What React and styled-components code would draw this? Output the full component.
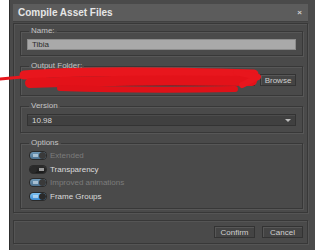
import React from 'react';
import styled, { createGlobalStyle } from 'styled-components';

const GlobalStyle = createGlobalStyle`
  html, body {
    margin: 0;
    padding: 0;
    background: #fff;
  }
  body {
    font-family: "Liberation Sans", Arial, sans-serif;
  }
`;

const Page = styled.div`
  position: relative;
  width: 315px;
  height: 250px;
  padding-left: 9px;
  box-sizing: border-box;
  display: flex;
  overflow: hidden;
`;

const Window = styled.div`
  flex: 1;
  display: flex;
  flex-direction: column;
  background: #4a4a4a;
  border-left: 1px solid #2e2e2e;
  padding: 4px 7px 6px 3px;
  gap: 1px;
`;

const TitleBar = styled.div`
  height: 17px;
  flex: none;
  display: flex;
  align-items: center;
  justify-content: space-between;
  padding: 0 6px 0 5px;
  background: #5c5c5c;
  border-bottom: 1px solid #404040;
`;

const Title = styled.span`
  color: #e6e6e6;
  font-size: 10px;
  font-weight: bold;
`;

const Close = styled.span`
  color: #cfcfcf;
  font-size: 8px;
  font-weight: bold;
`;

const Panel = styled.div`
  border: 1px solid #383838;
  box-shadow: inset 1px 1px 0 #555, 1px 1px 0 #555;
  display: flex;
  flex-direction: column;
  gap: ${(p) => p.gap || 0}px;
  padding: ${(p) => p.pad};
`;

const Group = styled.fieldset`
  margin: 0;
  border: 1px solid #383838;
  box-shadow: inset 1px 1px 0 #575757, 1px 1px 0 #575757;
  padding: ${(p) => p.pt ?? 3}px 6px ${(p) => p.pb || 5}px 6px;
  min-width: 0;
  display: flex;
  flex-direction: ${(p) => (p.column ? 'column' : 'row')};
  align-items: ${(p) => (p.column ? 'flex-start' : 'center')};
  gap: ${(p) => p.gap || 0}px;
`;

const Legend = styled.legend`
  color: #c4c4c4;
  font-size: 8px;
  line-height: 10px;
  padding: 0 2px;
  margin-left: 2px;
`;

const TextInput = styled.div`
  flex: 1;
  height: ${(p) => p.h || 11}px;
  display: flex;
  align-items: center;
  padding: 0 4px;
  font-size: 8px;
  box-sizing: border-box;
  background: ${(p) => (p.light ? '#a9a9a9' : '#3e3e3e')};
  color: ${(p) => (p.light ? '#2c2c2c' : '#d8d8d8')};
  border: 1px solid ${(p) => (p.light ? '#8c8c8c' : '#333')};
`;

const Select = styled(TextInput)`
  justify-content: space-between;
  background: #404040;
  box-shadow: inset 0 1px 0 #4c4c4c;
`;

const Caret = styled.span`
  width: 0;
  height: 0;
  border-left: 3px solid transparent;
  border-right: 3px solid transparent;
  border-top: 3px solid #bdbdbd;
`;

const Button = styled.div`
  width: ${(p) => p.w || 40}px;
  height: 12px;
  box-sizing: border-box;
  display: flex;
  align-items: center;
  justify-content: center;
  font-size: 8px;
  color: #d0d0d0;
  background: #444;
  border: 1px solid #333;
  box-shadow: inset 1px 1px 0 #575757;
`;

const OptionRow = styled.div`
  display: flex;
  align-items: center;
  gap: 4px;
  height: 13.5px;
  padding-left: 3px;
  font-size: 8px;
  color: ${(p) => (p.disabled ? '#7c7c7c' : '#dcdcdc')};
`;

const Track = styled.span`
  position: relative;
  width: 16px;
  height: 7px;
  border-radius: 4px;
  background: ${(p) =>
    p.on
      ? p.disabled
        ? 'linear-gradient(#6d97b6, #4d7290)'
        : 'linear-gradient(#7dc2f2, #3a8ad0)'
      : 'linear-gradient(#2c2c2c, #1a1a1a)'};
  box-shadow: 0 0 0 1px #2a2a2a;
`;

const Knob = styled.span`
  position: absolute;
  top: 0;
  ${(p) => (p.on ? 'right: 0;' : 'left: 0;')}
  width: 7px;
  height: 7px;
  border-radius: 50%;
  background: ${(p) => (p.disabled ? '#3a3a3a' : '#2a2a2a')};
`;

const Mark = styled.span`
  position: absolute;
  top: 2px;
  ${(p) => (p.on ? 'left: 3px;' : 'right: 2px;')}
  width: 5px;
  height: 3px;
  background: ${(p) => (p.on ? 'rgba(230,240,250,0.55)' : '#9a9a9a')};
`;

const Footer = styled(Panel)`
  margin-top: 6px;
  height: 26px;
  box-sizing: border-box;
  flex-direction: row;
  justify-content: flex-end;
  align-items: center;
  gap: 7px;
  padding: 0 4px 0 0;
`;

const Scribble = styled.svg`
  position: absolute;
  left: 0;
  top: 63px;
  pointer-events: none;
`;

const options = [
  { label: 'Extended', on: true, disabled: true },
  { label: 'Transparency', on: false },
  { label: 'Improved animations', on: true, disabled: true },
  { label: 'Frame Groups', on: true },
];

const Switch = ({ on, disabled }) => (
  <Track on={on} disabled={disabled}>
    <Mark on={on} />
    <Knob on={on} disabled={disabled} />
  </Track>
);

export default function App() {
  return (
    <>
      <GlobalStyle />
      <Page>
        <Window>
          <TitleBar>
            <Title>Compile Asset Files</Title>
            <Close>×</Close>
          </TitleBar>
          <Panel gap={5} pad="2px 4px 3px 6px">
            <Group>
              <Legend>Name:</Legend>
              <TextInput light>Tibia</TextInput>
            </Group>
            <Group gap={5} pb={9}>
              <Legend>Output Folder:</Legend>
              <TextInput h={12} />
              <Button w={36}>Browse</Button>
            </Group>
            <Group pb={6}>
              <Legend>Version</Legend>
              <Select h={12}>
                10.98
                <Caret />
              </Select>
            </Group>
            <Group column pt={1} pb={5}>
              <Legend>Options</Legend>
              {options.map((o) => (
                <OptionRow key={o.label} disabled={o.disabled}>
                  <Switch on={o.on} disabled={o.disabled} />
                  {o.label}
                </OptionRow>
              ))}
            </Group>
          </Panel>
          <Footer>
            <Button w={41}>Confirm</Button>
            <Button w={41}>Cancel</Button>
          </Footer>
        </Window>
        <Scribble width="300" height="40" viewBox="0 0 300 40">
          <path d="M0 16 C 20 14, 40 12, 70 11" stroke="#e8161d" strokeWidth="3" fill="none" strokeLinecap="round" />
          <path d="M24 12 C 80 7, 160 8, 254 11" stroke="#e8161d" strokeWidth="9" fill="none" strokeLinecap="round" />
          <path d="M30 20 C 100 17, 180 17, 252 18" stroke="#e31219" strokeWidth="10" fill="none" strokeLinecap="round" />
          <path d="M60 25 C 120 27, 180 27, 235 26" stroke="#df1118" strokeWidth="6" fill="none" strokeLinecap="round" />
          <path d="M236 9 L 258 14 L 242 22" stroke="#e8161d" strokeWidth="6" fill="none" strokeLinecap="round" strokeLinejoin="round" />
        </Scribble>
      </Page>
    </>
  );
}
